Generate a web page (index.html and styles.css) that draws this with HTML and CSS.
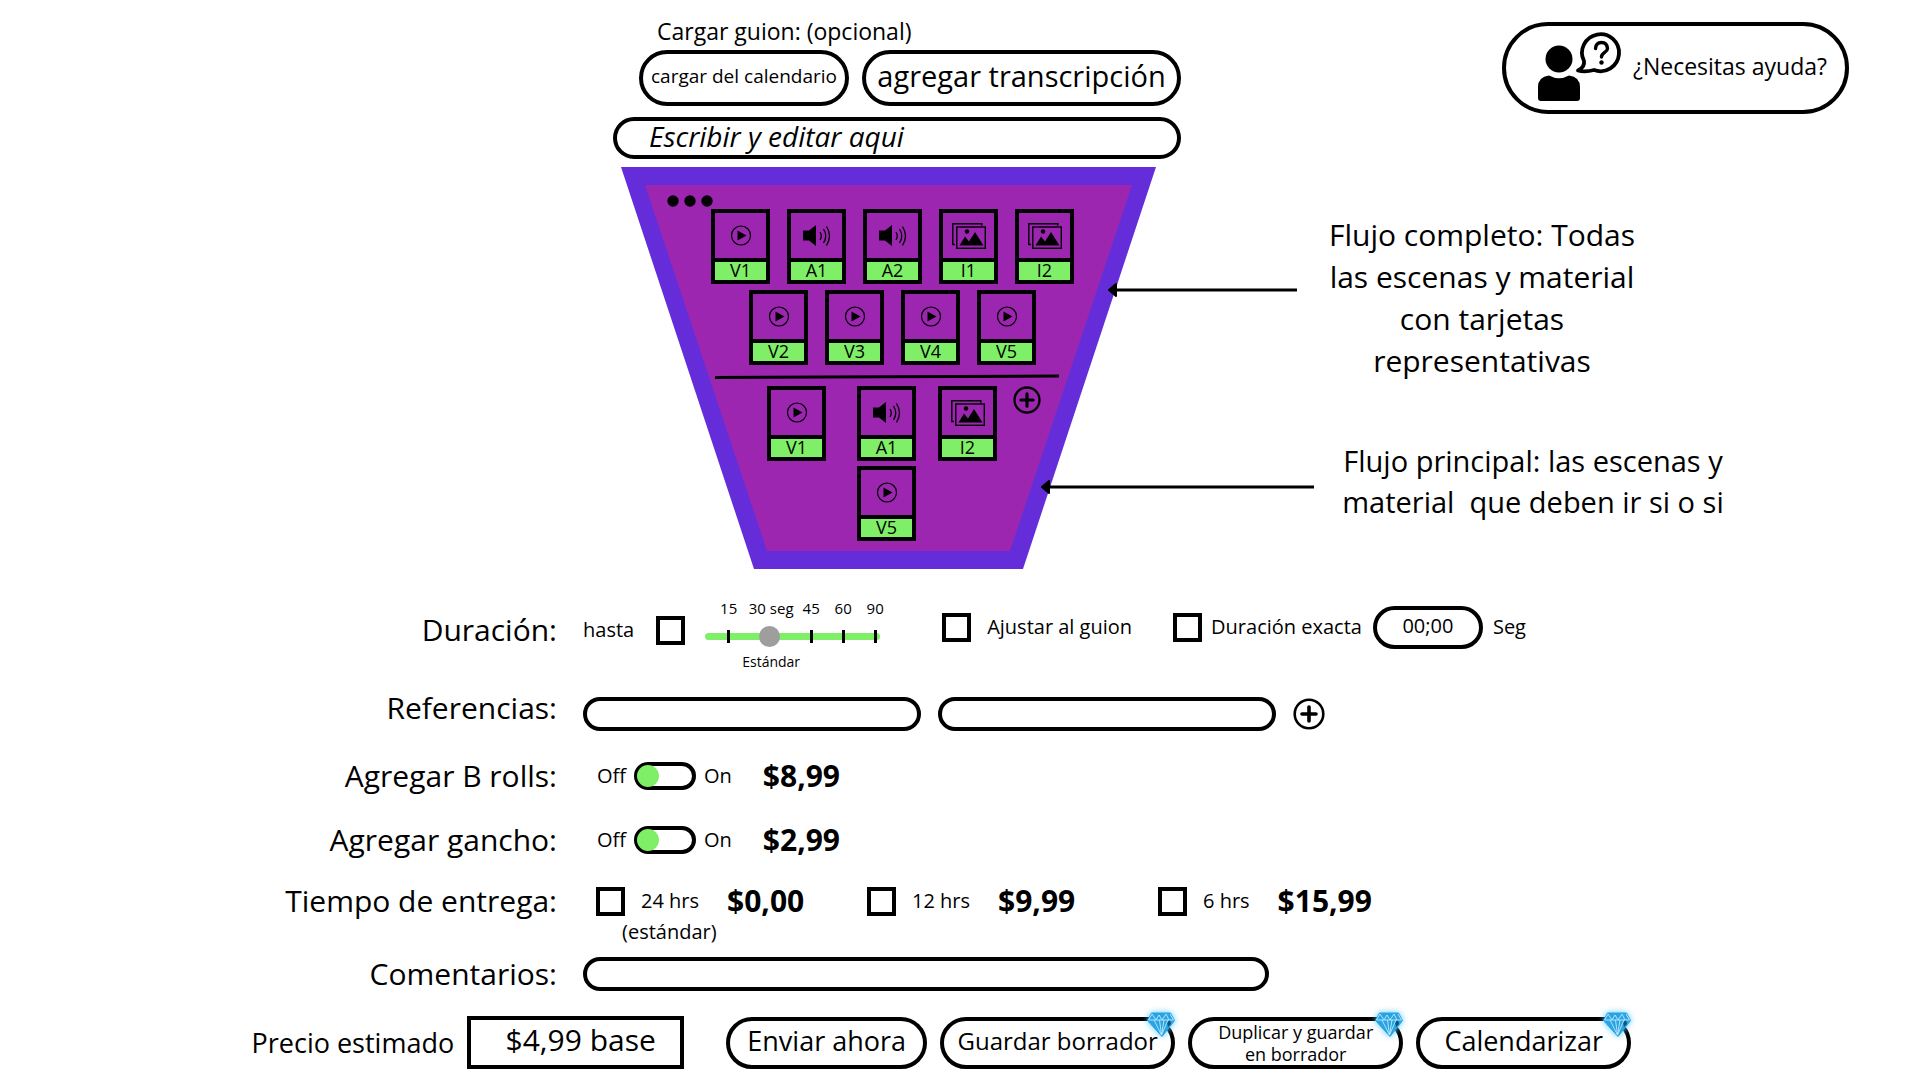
FILE: index.html
```html
<!DOCTYPE html>
<html lang="es">
<head>
<meta charset="utf-8">
<meta name="viewport" content="width=device-width, initial-scale=1">
<title>Pedido de edición</title>
<link rel="stylesheet" href="styles.css">
</head>
<body>
<svg class="sprite" aria-hidden="true">
  <symbol id="play" viewBox="0 0 34 26">
    <circle cx="17" cy="12.500" r="9.500" fill="none" stroke="#000" stroke-width="1.200"/>
    <path d="M13.500 7.500v10l9-5z"/>
  </symbol>
  <symbol id="audio" viewBox="0 0 34 26">
    <path d="M3 7.500h6l7-5.500v21l-7-5.500h-6z"/>
    <path d="M20 9q2.500 4 0 8M23.500 6q4.500 7 0 14M26.500 3.500q6 9.500 0 19" fill="none" stroke="#000" stroke-width="1.300"/>
  </symbol>
  <symbol id="image" viewBox="0 0 34 26">
    <path d="M3 21.500H.8V.8h29v2" fill="none" stroke="#000" stroke-width="1.400"/>
    <rect x="4.800" y="4" width="28.500" height="21.300" fill="none" stroke="#000" stroke-width="1.400"/>
    <circle cx="15" cy="8.500" r="2.200"/>
    <path d="M7.500 22.500l5.500-9 4 5 6-9.500 8.500 13.500z"/>
  </symbol>
  <symbol id="plus" viewBox="0 0 32 32">
    <circle cx="16" cy="16" r="14.300" fill="none" stroke="#000" stroke-width="2.600"/>
    <path d="M16 9v14M9 16h14" stroke="#000" stroke-width="3.600" stroke-linecap="round"/>
  </symbol>
  <symbol id="gem" viewBox="0 0 32 30">
    <path d="M6.500 4h19l4 7.500L17 27.500 2.500 11.500z" fill="#28a4e2" stroke="#28a4e2" stroke-linejoin="round"/>
    <path d="M22 13l3-2 1 4-3 3z" fill="#0d557f"/>
    <path d="M3.500 11h25M7 5l4 6 3-5 3 5 4-6 3 6M9 11l7.500 15M23 11l-6.500 15M14.500 11l2 15M19 11l-2.500 15M3.500 11L7 5M28.500 11L25 5" fill="none" stroke="#bdeaff" stroke-width=".9"/>
  </symbol>
</svg>

<main class="page">
  <section class="studio">
    <div class="script">
      <p class="script-title">Cargar guion: (opcional)</p>
      <div class="script-actions">
        <button type="button" class="pill pill-calendar">cargar del calendario</button>
        <button type="button" class="pill pill-transcript">agregar transcripción</button>
      </div>
      <input class="pill script-input" type="text" placeholder="Escribir y editar aqui" aria-label="Guion">
    </div>

    <button type="button" class="pill help">
      <svg class="help-icon" viewBox="0 0 86 72" aria-hidden="true">
        <circle cx="23" cy="29" r="13.500"/>
        <path d="M2 68V57q0-10 11-11.500 10 5.500 20 0Q44 47 44 57v11q0 3-3 3H5q-3 0-3-3z"/>
        <path d="M48 31A18.500 18.500 0 1 1 58 40Q49 42.500 42 40.500 49 37 48 31z" fill="none" stroke="#000" stroke-width="3.800" stroke-linejoin="round"/>
        <path d="M59.500 18.500q.5-6 6-6t6 6c0 4-6 4-6 8.500" fill="none" stroke="#000" stroke-width="3.400" stroke-linecap="round"/>
        <circle cx="65.500" cy="32.500" r="2.200"/>
      </svg>
      ¿Necesitas ayuda?
    </button>

    <div class="funnel">
      <svg class="funnel-shape" viewBox="0 0 535 402" preserveAspectRatio="none" aria-hidden="true">
        <path d="M0 0H535L402 402H133z" fill="#642dd9"/>
        <path d="M24 18H511L389 384H146z" fill="#9d26b0"/>
      </svg>
      <button type="button" class="icon-button more" aria-label="Más opciones">
        <svg viewBox="0 0 46 12"><circle cx="6" cy="6" r="5.700"/><circle cx="23" cy="6" r="5.700"/><circle cx="40" cy="6" r="5.700"/></svg>
      </button>
      <div class="cards">
        <div class="card"><svg><use href="#play"/></svg><span>V1</span></div>
        <div class="card"><svg><use href="#audio"/></svg><span>A1</span></div>
        <div class="card"><svg><use href="#audio"/></svg><span>A2</span></div>
        <div class="card"><svg><use href="#image"/></svg><span>I1</span></div>
        <div class="card"><svg><use href="#image"/></svg><span>I2</span></div>
      </div>
      <div class="cards">
        <div class="card"><svg><use href="#play"/></svg><span>V2</span></div>
        <div class="card"><svg><use href="#play"/></svg><span>V3</span></div>
        <div class="card"><svg><use href="#play"/></svg><span>V4</span></div>
        <div class="card"><svg><use href="#play"/></svg><span>V5</span></div>
      </div>
      <svg class="divider" viewBox="0 0 344 9" aria-hidden="true"><path d="M0 6.500L344 5" stroke="#000" stroke-width="3"/></svg>
      <div class="cards-main">
        <div class="card"><svg><use href="#play"/></svg><span>V1</span></div>
        <div class="card"><svg><use href="#audio"/></svg><span>A1</span></div>
        <div class="card"><svg><use href="#image"/></svg><span>I2</span></div>
        <button type="button" class="icon-button add-card" aria-label="Agregar tarjeta"><svg><use href="#plus"/></svg></button>
        <div class="card card-second"><svg><use href="#play"/></svg><span>V5</span></div>
      </div>
    </div>

    <div class="notes">
      <svg class="pointers" viewBox="0 0 274 220" aria-hidden="true">
        <path d="M72 10H256M8 207H273" stroke="#000" stroke-width="3"/>
        <path d="M68 10l7-6v12zM1 207l7-6v12z" stroke="#000" stroke-width="2" stroke-linejoin="round"/>
      </svg>
      <p class="note note-full">Flujo completo: Todas las escenas y material con tarjetas representativas</p>
      <p class="note note-main">Flujo principal: las escenas y material&nbsp; que deben ir si o si</p>
    </div>
  </section>

  <form class="order">
    <div class="row">
      <span class="row-label">Duración:</span>
      <div class="controls controls-duration">
        <label class="upto">hasta <input type="checkbox" class="box"></label>
        <div class="slider">
          <span>15</span><span>30 seg</span><span>45</span><span>60</span><span>90</span>
          <input type="range" min="0" max="100" value="35" aria-label="Duración en segundos">
          <i class="tick tick-15"></i><i class="tick tick-45"></i><i class="tick tick-60"></i><i class="tick tick-90"></i>
          <small>Estándar</small>
        </div>
        <div class="duration-options">
          <label class="fit"><input type="checkbox" class="box"> Ajustar al guion</label>
          <label class="exact"><input type="checkbox" class="box"> Duración exacta</label>
          <label class="seconds"><input type="text" class="pill" value="00;00" aria-label="Segundos exactos"> Seg</label>
        </div>
      </div>
    </div>

    <div class="row row-refs">
      <label class="row-label" for="ref1">Referencias:</label>
      <div class="controls controls-refs">
        <input id="ref1" type="text" class="pill field">
        <input type="text" class="pill field" aria-label="Segunda referencia">
        <button type="button" class="icon-button add-ref" aria-label="Agregar referencia"><svg><use href="#plus"/></svg></button>
      </div>
    </div>

    <div class="row">
      <label class="row-label" for="brolls">Agregar B rolls:</label>
      <div class="controls controls-switch">
        <span>Off</span><input id="brolls" type="checkbox" class="switch"><span>On</span>
        <strong class="price">$8,99</strong>
      </div>
    </div>

    <div class="row">
      <label class="row-label" for="hook">Agregar gancho:</label>
      <div class="controls controls-switch">
        <span>Off</span><input id="hook" type="checkbox" class="switch"><span>On</span>
        <strong class="price">$2,99</strong>
      </div>
    </div>

    <div class="row row-delivery">
      <span class="row-label">Tiempo de entrega:</span>
      <div class="controls-delivery">
        <div class="delivery">
          <input id="h24" type="checkbox" class="box"><label for="h24">24 hrs</label><strong class="price">$0,00</strong>
          <small>(estándar)</small>
        </div>
        <div class="delivery">
          <input id="h12" type="checkbox" class="box"><label for="h12">12 hrs</label><strong class="price">$9,99</strong>
        </div>
        <div class="delivery">
          <input id="h6" type="checkbox" class="box"><label for="h6">6 hrs</label><strong class="price">$15,99</strong>
        </div>
      </div>
    </div>

    <div class="row">
      <label class="row-label" for="comments">Comentarios:</label>
      <div class="controls"><input id="comments" type="text" class="pill field field-wide"></div>
    </div>

    <div class="checkout">
      <span class="total-label">Precio estimado</span>
      <output class="total">$4,99 base</output>
      <button type="submit" class="pill action send">Enviar ahora</button>
      <button type="button" class="pill action draft">Guardar borrador<svg class="gem"><use href="#gem"/></svg></button>
      <button type="button" class="pill action copy">Duplicar y guardar en borrador<svg class="gem"><use href="#gem"/></svg></button>
      <button type="button" class="pill action schedule">Calendarizar<svg class="gem"><use href="#gem"/></svg></button>
    </div>
  </form>
</main>
</body>
</html>
```
FILE: styles.css
```css
* { box-sizing: border-box; }

body {
  margin: 0;
  background: #fff;
  color: #000;
  font-family: "Open Sans", "Noto Sans", sans-serif;
  font-size: 20px;
  line-height: 28px;
}

p { margin: 0; }
button, input { font: inherit; color: inherit; margin: 0; }
button { cursor: pointer; }
.sprite { position: absolute; width: 0; height: 0; }

.pill {
  border: 4px solid #000;
  border-radius: 28px;
  background: #fff;
  padding: 0 0 4px;
}

.icon-button { display: block; border: 0; background: none; padding: 0; }
.icon-button svg { display: block; width: 100%; height: 100%; }

/* Script, funnel and notes */
.studio {
  display: grid;
  grid-template-columns: minmax(0, 613fr) 568px minmax(0, 739fr);
  row-gap: 8px;
  padding-top: 17px;
}

.script { grid-column: 2; }
.script-title { padding-left: 44px; font-size: 23px; }
.script-actions { display: flex; gap: 13px; padding: 5px 0 11px 26px; }
.script-actions .pill { height: 56px; white-space: nowrap; }
.pill-calendar { width: 210px; font-size: 19px; }
.pill-transcript { flex: 1; font-size: 29px; }
.script-input {
  display: block;
  width: 100%;
  height: 42px;
  padding: 0 32px 4px;
  font-size: 28px;
  font-style: italic;
}
.script-input::placeholder { color: #000; opacity: 1; }

.help {
  grid-column: 3;
  justify-self: end;
  align-self: start;
  display: flex;
  align-items: center;
  gap: 11px;
  width: 347px;
  height: 92px;
  margin: 5px 71px 0 0;
  padding-left: 30px;
  border-radius: 46px;
  font-size: 23px;
  white-space: nowrap;
}
.help-icon { flex: none; width: 86px; height: 72px; }

.funnel {
  grid-column: 2;
  position: relative;
  display: flex;
  flex-direction: column;
  gap: 6px;
  width: 535px;
  height: 402px;
  margin-left: 8px;
  padding: 28px 0 0 8px;
}
.funnel > * { position: relative; }
.funnel .funnel-shape { position: absolute; inset: 0; width: 100%; height: 100%; }
.more { width: 46px; height: 12px; margin: 0 0 -4px 38px; }
.cards { display: flex; justify-content: center; gap: 17px; }
.cards-main {
  display: grid;
  grid-template-columns: 90px 81px 75px 28px;
  row-gap: 5px;
  padding-left: 138px;
}
.card-second { grid-column: 2; }
.divider { width: 344px; height: 9px; margin-left: 86px; }

.card {
  display: grid;
  grid-template-rows: 45px 22px;
  width: 59px;
  height: 75px;
  border: 4px solid #000;
}
.card svg { place-self: center; width: 34px; height: 26px; }
.card span {
  border-top: 4px solid #000;
  background: #7fef67;
  font-size: 18px;
  line-height: 16px;
  text-align: center;
}
.add-card { width: 28px; height: 28px; }

.notes {
  grid-column: 3;
  position: relative;
  display: flex;
  flex-direction: column;
  gap: 58px;
  padding-top: 47px;
}
.note { text-align: center; }
.note-full { width: 320px; margin-left: 141px; font-size: 30px; line-height: 42px; }
.note-main { width: 400px; margin-left: 152px; font-size: 29px; line-height: 41px; }
.pointers { position: absolute; left: -140px; top: 113px; width: 274px; height: 220px; }

/* Order form */
.order { padding-top: 19px; }

.row {
  display: grid;
  grid-template-columns: minmax(0, 557fr) minmax(0, 1337fr);
  column-gap: 26px;
  align-items: center;
  min-height: 64px;
}
.row-label { font-size: 30px; line-height: 42px; text-align: right; }
.controls { display: flex; align-items: center; white-space: nowrap; }

.box {
  appearance: none;
  flex: none;
  width: 29px;
  height: 29px;
  border: 4px solid #000;
  background: #fff;
}
.box:checked { background: #7fef67; }

.controls-duration { min-height: 84px; }
.upto { display: flex; align-items: center; gap: 22px; margin-right: 20px; }

.slider {
  align-self: flex-end;
  display: grid;
  grid-template-columns: 31px 54px 26px 38px 26px;
  grid-template-rows: 27px 22px 25px;
  justify-items: center;
  padding-left: 8px;
  font-size: 15px;
  line-height: 20px;
}
.slider input {
  appearance: none;
  grid-area: 2 / 1 / 3 / 6;
  justify-self: start;
  width: 175px;
  height: 22px;
  margin-left: -8px;
  background: none;
}
.slider input::-webkit-slider-runnable-track { height: 7px; border-radius: 4px; background: #7fef67; }
.slider input::-webkit-slider-thumb {
  appearance: none;
  width: 21px;
  height: 21px;
  margin-top: -7px;
  border-radius: 50%;
  background: #9e9e9e;
}
.tick {
  grid-row: 2;
  align-self: center;
  width: 3px;
  height: 13px;
  background: #000;
  pointer-events: none;
  z-index: 1;
}
.tick-15 { grid-column: 1; }
.tick-45 { grid-column: 3; }
.tick-60 { grid-column: 4; }
.tick-90 { grid-column: 5; }
.slider small { grid-area: 3 / 2; align-self: end; font-size: 14px; }

.duration-options { display: flex; align-items: center; padding: 0 0 6px 54px; }
.duration-options label { display: flex; align-items: center; }
.fit { gap: 16px; }
.exact { gap: 9px; margin-left: 41px; }
.seconds { gap: 10px; margin-left: 11px; }
.seconds .pill { width: 110px; height: 43px; border-radius: 22px; text-align: center; }

.row-refs { min-height: 72px; }
.controls-refs { gap: 17px; padding-top: 12px; }
.field { width: 338px; height: 34px; padding: 0 16px; border-radius: 17px; }
.field-wide { width: 686px; }
.add-ref { width: 32px; height: 32px; }

.controls-switch { gap: 8px; padding-left: 14px; }
.switch {
  appearance: none;
  width: 62px;
  height: 28px;
  border: 4px solid #000;
  border-radius: 14px;
}
.switch::before {
  content: "";
  display: block;
  width: 22px;
  height: 22px;
  margin: -1px;
  border-radius: 50%;
  background: #7fef67;
}
.switch:checked::before { margin-left: 33px; }
.price { font-size: 30px; line-height: 42px; font-weight: 700; }
.controls-switch .price { margin-left: 23px; }

.row-delivery { align-items: start; min-height: 70px; padding-top: 8px; }
.controls-delivery {
  display: grid;
  grid-template-columns: 271px 291px auto;
  align-items: start;
  padding-left: 13px;
  white-space: nowrap;
}
.delivery {
  display: grid;
  grid-template-columns: 29px auto 1fr;
  column-gap: 16px;
  align-items: center;
}
.delivery .price { margin-left: 12px; }
.delivery small { grid-column: 1 / 4; padding-left: 26px; font-size: 20px; line-height: 20px; }

.checkout {
  display: flex;
  align-items: center;
  gap: 13px;
  min-height: 73px;
  padding-left: 13.1%;
  white-space: nowrap;
}
.total-label { font-size: 27px; }
.total {
  width: 217px;
  height: 53px;
  margin-right: 29px;
  padding-left: 10px;
  border: 4px solid #000;
  font-size: 30px;
  line-height: 40px;
  text-align: center;
}
.action { position: relative; height: 52px; border-radius: 26px; }
.send { width: 201px; font-size: 27px; }
.draft { width: 235px; font-size: 24px; }
.copy { width: 215px; padding: 0 24px; font-size: 18px; line-height: 22px; white-space: normal; }
.schedule { width: 215px; font-size: 27px; }
.gem {
  position: absolute;
  right: -6px;
  top: -12px;
  width: 32px;
  height: 30px;
  filter: drop-shadow(0 0 3px #5cc8ff);
}
```
